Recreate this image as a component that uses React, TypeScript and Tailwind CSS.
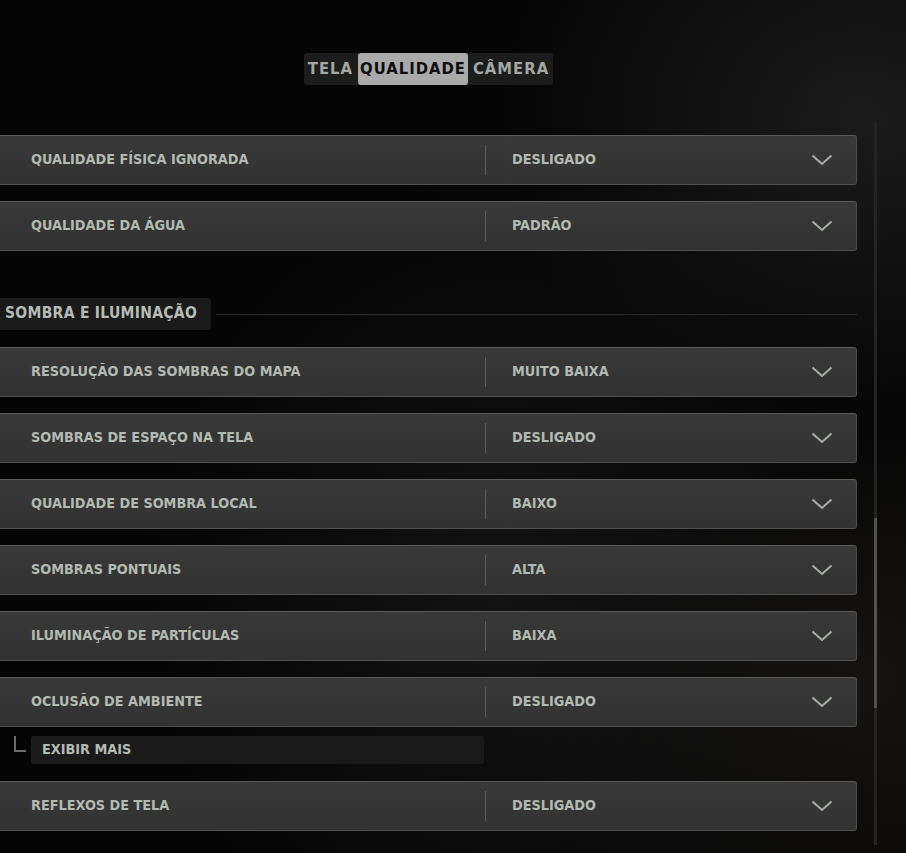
import { useState } from 'react';

const FONT = "font-['DejaVu_Sans_Condensed','Liberation_Sans',sans-serif]";

type Setting = { label: string; value: string };

const topRows: Setting[] = [
  { label: 'QUALIDADE FÍSICA IGNORADA', value: 'DESLIGADO' },
  { label: 'QUALIDADE DA ÁGUA', value: 'PADRÃO' },
];

const shadowRows: Setting[] = [
  { label: 'RESOLUÇÃO DAS SOMBRAS DO MAPA', value: 'MUITO BAIXA' },
  { label: 'SOMBRAS DE ESPAÇO NA TELA', value: 'DESLIGADO' },
  { label: 'QUALIDADE DE SOMBRA LOCAL', value: 'BAIXO' },
  { label: 'SOMBRAS PONTUAIS', value: 'ALTA' },
  { label: 'ILUMINAÇÃO DE PARTÍCULAS', value: 'BAIXA' },
  { label: 'OCLUSÃO DE AMBIENTE', value: 'DESLIGADO' },
];

function Chevron() {
  return (
    <svg width="22" height="12" viewBox="0 0 22 12" fill="none">
      <polyline points="1.5,1.5 11,10 20.5,1.5" stroke="#a7afa6" strokeWidth="2" />
    </svg>
  );
}

function SettingRow({ label, value }: Setting) {
  return (
    <div className="flex h-[50px] items-center rounded-[3px] border-t border-b border-r border-t-[#5a5b59] border-b-[#505150] border-r-[#4a4b4a] bg-gradient-to-b from-[#383838] to-[#323232]">
      <div className="w-[495px] shrink-0 whitespace-nowrap pl-[41px] text-[14.3px] font-bold text-[#b3bab1]">{label}</div>
      <div className="h-[30px] w-px bg-[#5b5c5a]" />
      <div className="flex-1 whitespace-nowrap pl-[26px] text-[14.3px] font-bold text-[#b3bab1]">{value}</div>
      <div className="pr-[23px]">
        <Chevron />
      </div>
    </div>
  );
}

export default function App() {
  const [tab, setTab] = useState('QUALIDADE');
  const tabs = ['TELA', 'QUALIDADE', 'CÂMERA'];

  return (
    <div
      className={`${FONT} relative h-[853px] w-[906px] overflow-hidden bg-[#050505] bg-[radial-gradient(ellipse_at_95%_14%,#1b1b1b_0%,transparent_30%),radial-gradient(ellipse_at_55%_70%,#131313_0%,transparent_50%),radial-gradient(ellipse_at_95%_80%,#161412_0%,transparent_30%)]`}
    >
      <div className="flex">
        <div className="-ml-[10px] w-[867px] shrink-0">
          {/* Tabs */}
          <div className="flex justify-center pt-[53px] pl-[10px]">
            <div className="flex h-[32px] items-center gap-[3px] rounded-[3px] bg-[#1b1c1b] px-[2px]">
              {tabs.map((t) => (
                <button
                  key={t}
                  onClick={() => setTab(t)}
                  className={`flex h-[32px] items-center whitespace-nowrap rounded-[3px] px-[2px] text-[16.5px] font-bold tracking-[1px] ${
                    tab === t ? 'bg-[#a9aaa9] text-[#0e0e0e]' : 'text-[#a3a7a2]'
                  }`}
                >
                  {t}
                </button>
              ))}
            </div>
          </div>

          <div className="mt-[50px] flex flex-col gap-[16px]">
            {topRows.map((r) => (
              <SettingRow key={r.label} {...r} />
            ))}
          </div>

          {/* Section heading */}
          <div className="mt-[47px] flex items-center">
            <div className="flex h-[32px] w-[221px] shrink-0 items-center whitespace-nowrap rounded-[3px] bg-[#1a1a1a] pl-[15px] text-[15.5px] font-bold tracking-[0.3px] text-[#b6bcb4]">
              SOMBRA E ILUMINAÇÃO
            </div>
            <div className="ml-[5px] h-px flex-1 bg-[#2a2b2a]" />
          </div>

          <div className="mt-[17px] flex flex-col gap-[16px]">
            {shadowRows.map((r) => (
              <SettingRow key={r.label} {...r} />
            ))}
          </div>

          {/* Exibir mais */}
          <div className="mt-[9px] flex items-start">
            <div className="ml-[24px] h-[16px] w-[12px] border-b-2 border-l-2 border-[#6a6b69]" />
            <div className="ml-[5px] flex h-[28px] w-[453px] items-center whitespace-nowrap rounded-[3px] bg-[#1a1a1a] pl-[11px] text-[14.3px] font-bold text-[#b3bab1]">
              EXIBIR MAIS
            </div>
          </div>

          <div className="mt-[17px]">
            <SettingRow label="REFLEXOS DE TELA" value="DESLIGADO" />
          </div>
        </div>

        {/* Scrollbar */}
        <div className="ml-[17px] mt-[122px] flex h-[723px] w-[3px] flex-col bg-[#222322]">
          <div className="mt-[396px] h-[190px] w-[3px] bg-[#50524f]" />
        </div>
      </div>
    </div>
  );
}
